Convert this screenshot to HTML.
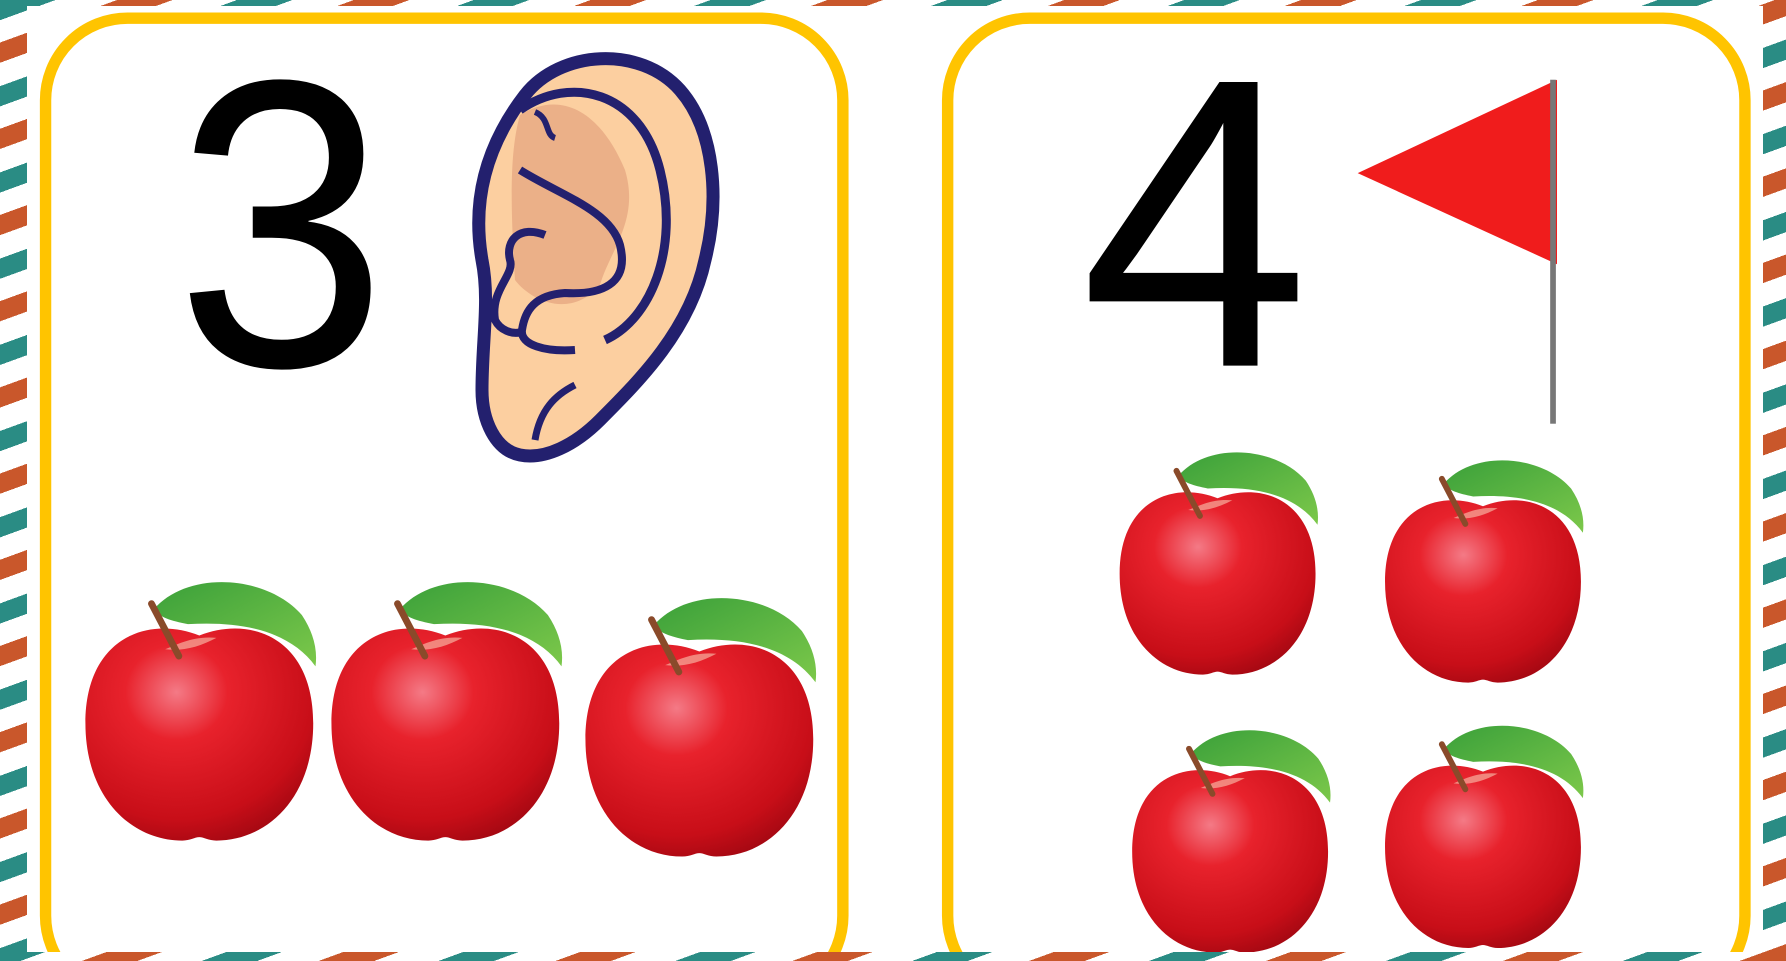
<!DOCTYPE html>
<html><head><meta charset="utf-8"><style>
html,body{margin:0;padding:0}
body{width:1786px;height:961px;overflow:hidden;position:relative;
background:repeating-linear-gradient(160deg,#2a8c84 0 19px,#fff 19px 40px,#c9572b 40px 59px,#fff 59px 81px);}
#panel{position:absolute;left:27px;top:6px;width:1736px;height:946px;background:#fff;overflow:hidden}
svg{position:absolute;left:0;top:0}
</style></head><body>
<div id="panel"></div>
<svg width="1786" height="961" viewBox="0 0 1786 961">
<defs>
<radialGradient id="ag" cx="0.4" cy="0.3" r="0.75">
<stop offset="0" stop-color="#f47a86"/><stop offset="0.3" stop-color="#e8222c"/><stop offset="0.8" stop-color="#c80e18"/><stop offset="1" stop-color="#a40812"/></radialGradient>
<linearGradient id="lg" x1="0" y1="0" x2="1" y2="1"><stop offset="0" stop-color="#3aa03a"/><stop offset="1" stop-color="#7cc84a"/></linearGradient>
<clipPath id="pc"><rect x="27" y="6" width="1736" height="946"/></clipPath>
<g id="apple">
<path d="M-40,-105 C-10,-140 60,-135 90,-100 C100,-85 104,-70 102,-55 C80,-85 40,-95 -10,-92 C-25,-95 -35,-98 -40,-105Z" fill="url(#lg)"/>
<path d="M0,-82 C45,-100 100,-80 100,-5 C100,60 60,98 15,98 C8,98 4,95 0,95 C-4,95 -8,98 -15,98 C-60,98 -100,60 -100,-5 C-100,-80 -45,-100 0,-82Z" fill="url(#ag)"/>
<path d="M-30,-70 C-20,-74 -5,-82 15,-80 C0,-72 -15,-68 -30,-70Z" fill="#f7b0a0" opacity="0.7"/>
<path d="M-18,-64 L-42,-110" stroke="#8a4a2a" stroke-width="6" stroke-linecap="round"/>
</g>
</defs>
<g clip-path="url(#pc)">
<g transform="scale(1.139)">
<rect x="40" y="16" width="700" height="860" rx="72" fill="none" stroke="#ffc400" stroke-width="10"/>
<rect x="832" y="16" width="700" height="860" rx="72" fill="none" stroke="#ffc400" stroke-width="10"/>
<text x="247" y="321" font-family="Liberation Sans, sans-serif" font-size="360" text-anchor="middle" fill="#000" transform="translate(247,0) scale(0.93,1) translate(-247,0)">3</text>
<text x="1049" y="321" font-family="Liberation Sans, sans-serif" font-size="362" text-anchor="middle" fill="#000">4</text>
<polygon points="1192,152 1367,70 1367,232" fill="#f01c1c"/>
<rect x="1361" y="70" width="5" height="302" fill="#777"/>
<use href="#apple" transform="translate(175,640)"/>
<use href="#apple" transform="translate(391,640)"/>
<use href="#apple" transform="translate(614,654)"/>
<use href="#apple" transform="translate(1069,508) scale(0.86)"/>
<use href="#apple" transform="translate(1302,515) scale(0.86)"/>
<use href="#apple" transform="translate(1080,752) scale(0.86)"/>
<use href="#apple" transform="translate(1302,748) scale(0.86)"/>
</g>
<g>
<path d="M525,95 C560,50 640,45 680,90 C715,130 720,200 705,260 C690,330 640,380 600,420 C575,445 545,460 520,455 C495,450 482,420 482,390 C482,340 490,300 482,260 C475,220 475,160 525,95Z" fill="#fccfa0" stroke="#23206e" stroke-width="13"/>
<path d="M520,115 C560,90 600,110 625,170 C640,220 610,250 600,285 C570,320 530,300 515,280 C510,200 510,150 520,115Z" fill="#e6a882" opacity="0.8"/>
<path d="M520,110 C570,75 640,90 660,170 C680,250 650,320 605,340" fill="none" stroke="#23206e" stroke-width="9"/>
<path d="M520,170 C560,195 610,210 620,245 C630,285 600,295 565,293 C535,295 525,310 522,330 C520,345 545,352 575,350" fill="none" stroke="#23206e" stroke-width="8"/>
<path d="M545,235 C520,225 505,240 510,260 C515,275 490,290 495,320 C500,330 512,335 522,332" fill="none" stroke="#23206e" stroke-width="8"/>
<path d="M535,112 C550,118 545,135 555,138" fill="none" stroke="#23206e" stroke-width="6"/>
<path d="M575,385 C555,395 540,410 535,440" fill="none" stroke="#23206e" stroke-width="7"/>
</g>
</g>
</svg>
</body></html>
